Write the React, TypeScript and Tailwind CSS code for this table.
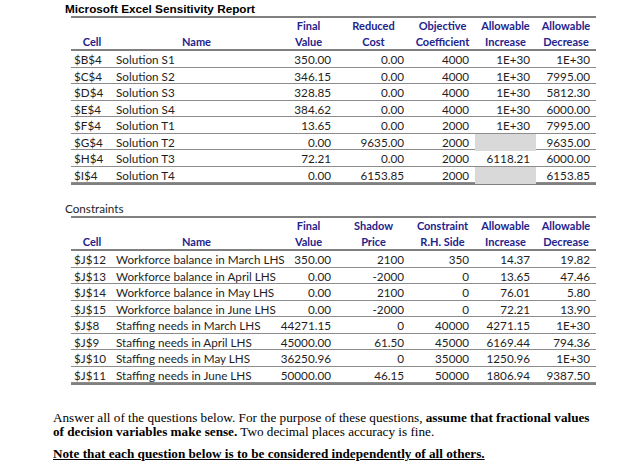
import React from "react";

const cols = "grid grid-cols-[42px_167px_57px_73px_65px_61px_60px]";

type Row = { cell: string; name: string; vals: (string | null)[] };

const variables: Row[] = [
  { cell: "$B$4", name: "Solution S1", vals: ["350.00", "0.00", "4000", "1E+30", "1E+30"] },
  { cell: "$C$4", name: "Solution S2", vals: ["346.15", "0.00", "4000", "1E+30", "7995.00"] },
  { cell: "$D$4", name: "Solution S3", vals: ["328.85", "0.00", "4000", "1E+30", "5812.30"] },
  { cell: "$E$4", name: "Solution S4", vals: ["384.62", "0.00", "4000", "1E+30", "6000.00"] },
  { cell: "$F$4", name: "Solution T1", vals: ["13.65", "0.00", "2000", "1E+30", "7995.00"] },
  { cell: "$G$4", name: "Solution T2", vals: ["0.00", "9635.00", "2000", null, "9635.00"] },
  { cell: "$H$4", name: "Solution T3", vals: ["72.21", "0.00", "2000", "6118.21", "6000.00"] },
  { cell: "$I$4", name: "Solution T4", vals: ["0.00", "6153.85", "2000", null, "6153.85"] },
];

const constraints: Row[] = [
  { cell: "$J$12", name: "Workforce balance in March LHS", vals: ["350.00", "2100", "350", "14.37", "19.82"] },
  { cell: "$J$13", name: "Workforce balance in April LHS", vals: ["0.00", "-2000", "0", "13.65", "47.46"] },
  { cell: "$J$14", name: "Workforce balance in May LHS", vals: ["0.00", "2100", "0", "76.01", "5.80"] },
  { cell: "$J$15", name: "Workforce balance in June LHS", vals: ["0.00", "-2000", "0", "72.21", "13.90"] },
  { cell: "$J$8", name: "Staffing needs in March LHS", vals: ["44271.15", "0", "40000", "4271.15", "1E+30"] },
  { cell: "$J$9", name: "Staffing needs in April LHS", vals: ["45000.00", "61.50", "45000", "6169.44", "794.36"] },
  { cell: "$J$10", name: "Staffing needs in May LHS", vals: ["36250.96", "0", "35000", "1250.96", "1E+30"] },
  { cell: "$J$11", name: "Staffing needs in June LHS", vals: ["50000.00", "46.15", "50000", "1806.94", "9387.50"] },
];

function Report({ heads, rows }: { heads: [string, string][]; rows: Row[] }) {
  return (
    <div className="ml-[71px] w-[525px]">
      <div className="h-[2px] bg-[#808080]" />
      <div className={`${cols} h-[31px] font-bold text-[11px] text-[#23238c] leading-[16px]`}>
        <div className="flex items-end justify-center">Cell</div>
        <div className="flex items-end justify-center">Name</div>
        {heads.map(([a, b]) => (
          <div key={a} className="flex flex-col items-center justify-end">
            <span>{a}</span>
            <span>{b}</span>
          </div>
        ))}
      </div>
      <div className="h-[2px] bg-[#808080]" />
      {rows.map((r) => (
        <div key={r.cell} className={`${cols} h-[16.5px] border-b border-[#8c8c8c] last:border-b-0 text-[11.7px] text-[#1e1e1e]`}>
          <div className="flex items-center pl-[3px] whitespace-nowrap">{r.cell}</div>
          <div className="flex items-center pl-[3px] whitespace-nowrap">{r.name}</div>
          {r.vals.map((v, i) =>
            v === null ? (
              <div key={i} className="bg-[#d9d9d9]" />
            ) : (
              <div key={i} className="flex items-center justify-end pr-[6px]">
                {v}
              </div>
            )
          )}
        </div>
      ))}
      <div className="h-[2px] bg-[#808080]" />
    </div>
  );
}

export default function App() {
  return (
    <div className="w-[644px] h-[466px] bg-white overflow-hidden font-['Lato',sans-serif]">
      <h1 className="pl-[65px] pt-[2px] leading-[14px] text-[11.75px] font-bold text-black font-['Liberation_Sans',Arial,sans-serif]">
        Microsoft Excel Sensitivity Report
      </h1>
      <Report
        heads={[
          ["Final", "Value"],
          ["Reduced", "Cost"],
          ["Objective", "Coefficient"],
          ["Allowable", "Increase"],
          ["Allowable", "Decrease"],
        ]}
        rows={variables}
      />

      <div className="mt-[17px] mb-[1px] pl-[65px] leading-[13px] text-[11.7px] text-[#1e1e1e]">Constraints</div>
      <Report
        heads={[
          ["Final", "Value"],
          ["Shadow", "Price"],
          ["Constraint", "R.H. Side"],
          ["Allowable", "Increase"],
          ["Allowable", "Decrease"],
        ]}
        rows={constraints}
      />

      <div className="mt-[26px] pl-[53px] font-['Liberation_Serif','Times_New_Roman',serif] text-[13.2px] leading-[14px] text-black">
        <p className="whitespace-nowrap">
          Answer all of the questions below. For the purpose of these questions,{" "}
          <b>assume that fractional values</b>
          <br />
          <b>of decision variables make sense.</b> Two decimal places accuracy is fine.
        </p>
        <p className="mt-[8px] font-bold underline whitespace-nowrap">
          Note that each question below is to be considered independently of all others.
        </p>
      </div>
    </div>
  );
}
